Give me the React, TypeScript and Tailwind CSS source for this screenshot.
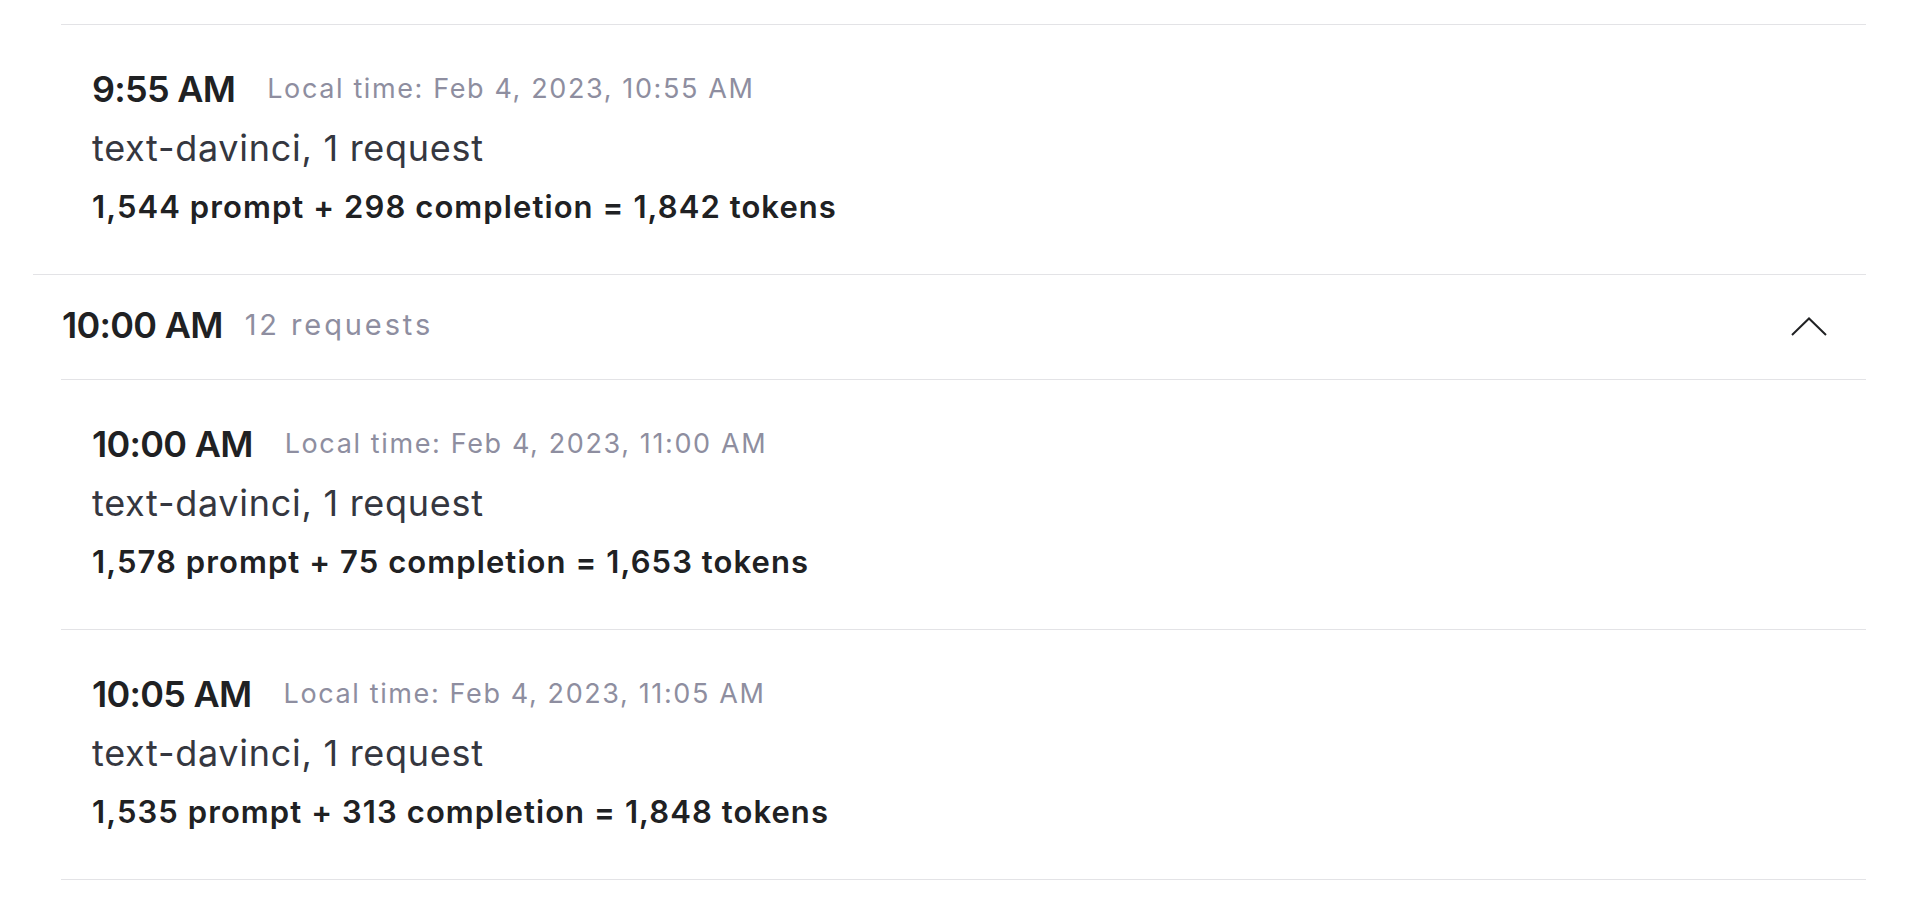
type UsageItem = {
  time: string;
  local: string;
  model: string;
  prompt: string;
  completion: string;
  total: string;
};

const before: UsageItem = {
  time: '9:55 AM',
  local: 'Feb 4, 2023, 10:55 AM',
  model: 'text-davinci',
  prompt: '1,544',
  completion: '298',
  total: '1,842',
};

const groupItems: UsageItem[] = [
  {
    time: '10:00 AM',
    local: 'Feb 4, 2023, 11:00 AM',
    model: 'text-davinci',
    prompt: '1,578',
    completion: '75',
    total: '1,653',
  },
  {
    time: '10:05 AM',
    local: 'Feb 4, 2023, 11:05 AM',
    model: 'text-davinci',
    prompt: '1,535',
    completion: '313',
    total: '1,848',
  },
];

function UsageRow({ item }: { item: UsageItem }) {
  return (
    <div className="h-[250px] border-t-[1.5px] border-[#e3e3e6] pl-[31px] pt-[35px]">
      <div className="flex h-[58px] items-center gap-[32px]">
        <span className="text-[36px] font-semibold tracking-[-0.02em] text-[#202123]">
          {item.time}
        </span>
        <span className="text-[27px] tracking-[0.06em] text-[#8e8ea0]">
          Local time: {item.local}
        </span>
      </div>
      <div className="flex h-[59px] items-center text-[36px] tracking-[0.02em] text-[#353740]">
        {item.model}, 1 request
      </div>
      <div className="flex h-[60px] items-center text-[31px] font-semibold tracking-[0.035em] text-[#202123]">
        {item.prompt} prompt + {item.completion} completion = {item.total} tokens
      </div>
    </div>
  );
}

export default function App() {
  return (
    <div
      className="min-h-screen w-full bg-white pl-[33px] pr-[54px] pt-[24px]"
      style={{ fontFamily: 'Inter, "Noto Sans", sans-serif' }}
    >
      <div className="ml-[28px]">
        <UsageRow item={before} />
      </div>

      <div className="border-t-[1.5px] border-[#e3e3e6]">
        <div className="flex h-[104px] items-center justify-between pb-[4px] pl-[29px] pr-[39px]">
          <div className="flex items-center gap-[22px]">
            <span className="text-[36px] font-semibold tracking-[-0.02em] text-[#202123]">
              10:00 AM
            </span>
            <span className="text-[29px] tracking-[0.1em] text-[#8e8ea0]">12 requests</span>
          </div>
          <svg width="36" height="19" viewBox="0 0 36 19" fill="none" className="mt-[2px]">
            <path d="M1 18 L18 1.5 L35 18" stroke="#202123" strokeWidth="2" />
          </svg>
        </div>
        <div className="ml-[28px]">
          {groupItems.map((item) => (
            <UsageRow key={item.time} item={item} />
          ))}
          <div className="border-t-[1.5px] border-[#e3e3e6]" />
        </div>
      </div>
    </div>
  );
}
